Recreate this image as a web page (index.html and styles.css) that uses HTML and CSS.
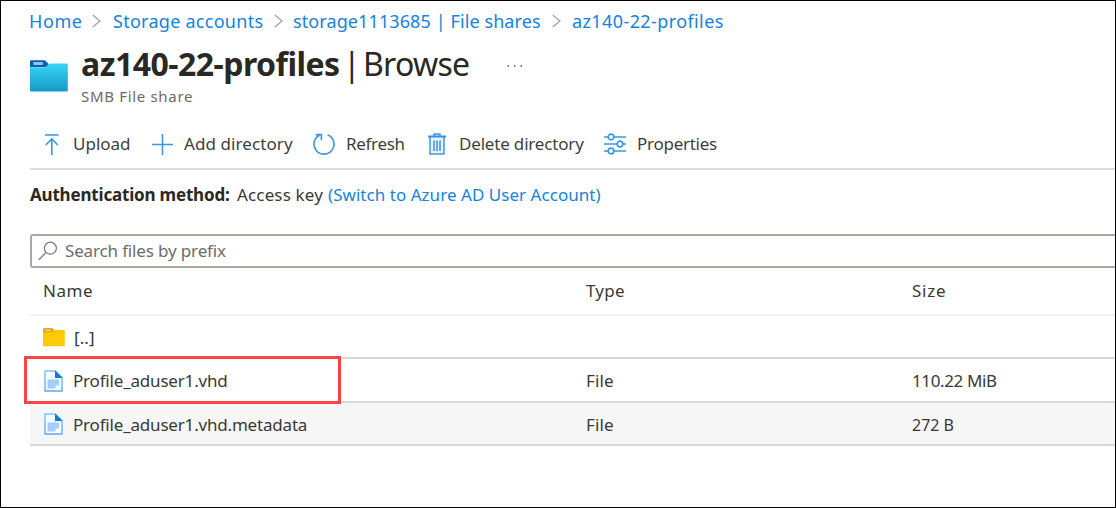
FILE: index.html
```html
<!DOCTYPE html>
<html lang="en">
<head>
<meta charset="utf-8">
<title>az140-22-profiles | Browse</title>
<link rel="stylesheet" href="styles.css">
</head>
<body>
<svg class="symbols" width="0" height="0">
  <defs>
    <linearGradient id="page-edge" x1="0" y1="0" x2="0" y2="1"><stop offset="0" stop-color="#86c0f3"/><stop offset="1" stop-color="#5aa8ec"/></linearGradient>
    <symbol id="file" viewBox="0 0 19 22">
      <path d="M1 1h10.5L18 7.5V21H1z" fill="#f6fbff" stroke="url(#page-edge)" stroke-width="1.4"/>
      <path d="M11 .5 18.6 8H11z" fill="#0f78d4"/>
      <path d="M3.5 9.5h11.5v6h-3.5v3h-8z" fill="#a5cdf9"/>
    </symbol>
    <symbol id="chevron" viewBox="0 0 9 14"><path d="M.8 1 8 7 .8 13" fill="none" stroke="#a3a3a3" stroke-width="1.3"/></symbol>
  </defs>
</svg>
<main class="blade">
  <nav class="breadcrumb">
    <a class="crumb home">Home</a>
    <svg class="chevron"><use href="#chevron"/></svg>
    <a class="crumb accounts">Storage accounts</a>
    <svg class="chevron"><use href="#chevron"/></svg>
    <a class="crumb account">storage1113685 | File shares</a>
    <svg class="chevron"><use href="#chevron"/></svg>
    <a class="crumb share">az140-22-profiles</a>
  </nav>

  <header class="header">
    <svg class="share-icon" viewBox="0 0 38 32">
      <defs><linearGradient id="share-fill" x1="0" y1="0" x2="0" y2="1"><stop offset="0" stop-color="#34d6f6"/><stop offset="1" stop-color="#1a98c8"/></linearGradient></defs>
      <path d="M0 1.5Q0 .3 1.2.3H14q1.2 0 2 .9L18.5 4v3H0z" fill="#0a5fae"/>
      <path d="M0 7.3h14.2q1.2 0 2-.9l2.2-2.2q.7-.8 2-.8H37q.8 0 .8.8v26.5q0 .8-.8.8H1q-1 0-1-.8z" fill="url(#share-fill)"/>
      <rect x="3.4" y="1.9" width="9.5" height="3" rx=".6" fill="#91c2ee"/>
    </svg>
    <div class="heading">
      <h1 class="title"><span class="title-name">az140-22-profiles</span><span class="title-bar">|</span><span class="title-page">Browse</span>
        <svg class="more" viewBox="0 0 16 4"><path d="M.5 2h1.5M7 2h1.5M13.5 2H15" stroke="#555" stroke-width="1.5"/></svg></h1>
      <p class="subtitle">SMB File share</p>
    </div>
  </header>

  <div class="toolbar">
    <button class="command upload"><svg width="16" height="21" viewBox="0 0 16 21"><path d="M1 1h13.5M7.8 21V5.5M1.8 11l6-6 6 6" fill="none" stroke="#3a97e2" stroke-width="1.6"/></svg><span>Upload</span></button>
    <button class="command add"><svg width="21" height="21" viewBox="0 0 21 21"><path d="M10.5 0v21M0 10.5h21" stroke="#3a97e2" stroke-width="1.6"/></svg><span>Add directory</span></button>
    <button class="command refresh"><svg width="22" height="22" viewBox="0 0 22 22"><path d="M14.6 1.8A10 10 0 1 1 6.5 2.2M2.6 1.6h5.8v5.6" fill="none" stroke="#3a97e2" stroke-width="1.6"/></svg><span>Refresh</span></button>
    <button class="command delete"><svg width="18" height="22" viewBox="0 0 18 22"><path d="M2 4v17h14V4M6 3V1h6v2" fill="#e5f3ff" stroke="#3f99e3" stroke-width="1.5"/><path d="M0 3.5h18" stroke="#3291e0" stroke-width="2"/><path d="M6 7.5v10.5M9 7.5v10.5M12 7.5v10.5" stroke="#3f99e3" stroke-width="1.6"/></svg><span>Delete directory</span></button>
    <button class="command properties"><svg width="22" height="22" viewBox="0 0 22 22"><g fill="none" stroke="#3a97e2" stroke-width="1.7"><path d="M0 4h4M10 4h12M0 11h13M19 11h3M0 18h4M10 18h12"/><circle cx="7" cy="4" r="2.8"/><circle cx="16" cy="11" r="2.8"/><circle cx="7" cy="18" r="2.8"/></g></svg><span>Properties</span></button>
  </div>

  <p class="auth"><strong>Authentication method:</strong><span class="auth-key">Access key</span><a class="auth-switch">(Switch to Azure AD User Account)</a></p>

  <div class="search">
    <svg width="20" height="20" viewBox="0 0 20 20"><circle cx="12.4" cy="7.2" r="6" fill="none" stroke="#7b7b7b" stroke-width="1.2"/><path d="M8 11.6.8 18.8" stroke="#7b7b7b" stroke-width="1.3"/></svg>
    <span>Search files by prefix</span>
  </div>

  <div class="files">
    <div class="row head"><span class="c-name">Name</span><span class="c-type">Type</span><span class="c-size">Size</span></div>
    <div class="row parent"><div class="cell"><svg class="folder" viewBox="0 0 22 19"><path d="M0 1.2Q0 .2 1 .2h8q.8 0 1.3.7L11 2h10q.8 0 .8.8v15.4H0z" fill="#ffca05"/><path d="M.2 4.5V1.2q0-.9.9-.9h7.6q.8 0 1.3.7l.8 1.2-1.4 2z" fill="#e4a31c"/><path d="M2.5 2.4h5" stroke="#fbe0a0" stroke-width="1.2"/></svg><span class="dots">[..]</span></div></div>
    <div class="row first"><div class="cell"><svg class="file"><use href="#file"/></svg><span>Profile_aduser1.vhd</span></div><span class="file-type">File</span><span class="size-mib">110.22 MiB</span><i class="highlight"></i></div>
    <div class="row second"><div class="cell"><svg class="file"><use href="#file"/></svg><span>Profile_aduser1.vhd.metadata</span></div><span class="file-type">File</span><span class="size-b">272 B</span></div>
  </div>
</main>
</body>
</html>
```
FILE: styles.css
```css
* { box-sizing: border-box; }

body {
  margin: 0;
  background: #fff;
  font: 17px/24px "Noto Sans", "Open Sans", sans-serif;
  color: #3a3934;
}

.symbols { position: absolute; }

.blade {
  height: 508px;
  border: 1px solid #000;
  padding-left: 29px;
  overflow: hidden;
  white-space: nowrap;
}

a { color: #1583dc; }
h1, p { margin: 0; }

.breadcrumb {
  display: flex;
  align-items: center;
  height: 40px;
}
.crumb { font-size: 18px; }
.home { width: 63px; margin-left: -1px; letter-spacing: .6px; }
.accounts { width: 161px; margin-left: 12px; letter-spacing: .27px; }
.account { width: 259px; margin-left: 10px; letter-spacing: .1px; }
.share { margin-left: 11px; letter-spacing: .4px; }
.chevron { width: 9px; height: 14px; flex: none; }

.header {
  display: flex;
  height: 79px;
  padding-top: 3px;
}
.share-icon { width: 38px; height: 32px; margin: 16px 13px 0 0; }
.title {
  display: flex;
  align-items: center;
  height: 40px;
  font-size: 32px;
  line-height: 40px;
  font-weight: 400;
  color: #292823;
}
.title-name { width: 262px; font-weight: 700; letter-spacing: -.52px; }
.title-bar { width: 20px; }
.title-page { width: 144px; letter-spacing: -.7px; }
.more { width: 16px; height: 4px; margin-top: 3px; }
.subtitle {
  margin-top: 2px;
  font-size: 15px;
  line-height: 21px;
  letter-spacing: .68px;
  color: #6b6a67;
}

.toolbar {
  display: flex;
  align-items: center;
  height: 50px;
  border-bottom: 2px solid #dedede;
}
.command {
  display: flex;
  align-items: center;
  flex: none;
  height: 40px;
  padding: 0;
  border: 0;
  background: none;
  font: inherit;
  color: #3f3e3c;
}
.command svg { flex: none; }
.upload { width: 107px; padding-left: 14px; gap: 13px; }
.add { width: 146px; padding-left: 15px; gap: 11px; letter-spacing: .09px; }
.refresh { width: 115px; padding-left: 30px; gap: 11px; letter-spacing: -.3px; }
.delete { width: 176px; padding-left: 30px; gap: 13px; letter-spacing: -.18px; }
.properties { padding-left: 30px; gap: 11px; letter-spacing: -.27px; }

.auth {
  display: flex;
  height: 24px;
  margin-top: 13px;
}
.auth strong { width: 207px; letter-spacing: -.19px; color: #292823; }
.auth-key { width: 91px; letter-spacing: .15px; }
.auth-switch { letter-spacing: .04px; }

.search {
  display: flex;
  align-items: center;
  height: 34px;
  margin-top: 27px;
  padding-left: 6px;
  gap: 7px;
  border: 2px solid #a9a9a2;
  border-right: 0;
  border-radius: 3px 0 0 3px;
  color: #6d6c69;
  letter-spacing: -.15px;
}

.row {
  position: relative;
  display: grid;
  grid-template-columns: 556px 326px 1fr;
  align-items: center;
  height: 44px;
  border-bottom: 2px solid #d6d9d9;
  letter-spacing: -.19px;
}
.head {
  height: 48px;
  border-bottom-color: #f1f1f1;
}
.c-name { padding-left: 13px; letter-spacing: .55px; }
.c-type { letter-spacing: .25px; }
.c-size { letter-spacing: .76px; }
.parent { height: 43px; padding-top: 3px; }
.first { padding-top: 2px; }
.second { height: 43px; padding-top: 2px; background: #f6f6f6; }
.cell { display: flex; align-items: center; padding-left: 13px; }
.folder { width: 22px; height: 19px; margin-right: 9px; margin-top: -2px; }
.file { width: 19px; height: 22px; margin: -1px 10px 0 1px; }
.file-type { letter-spacing: .14px; }
.dots { letter-spacing: .1px; }
.size-mib { letter-spacing: -.38px; }
.size-b { font-size: 16px; letter-spacing: 0; }

.highlight {
  position: absolute;
  left: -6px;
  top: -3px;
  width: 317px;
  height: 48px;
  border: 3px solid #fd4343;
  z-index: 1;
}
```
